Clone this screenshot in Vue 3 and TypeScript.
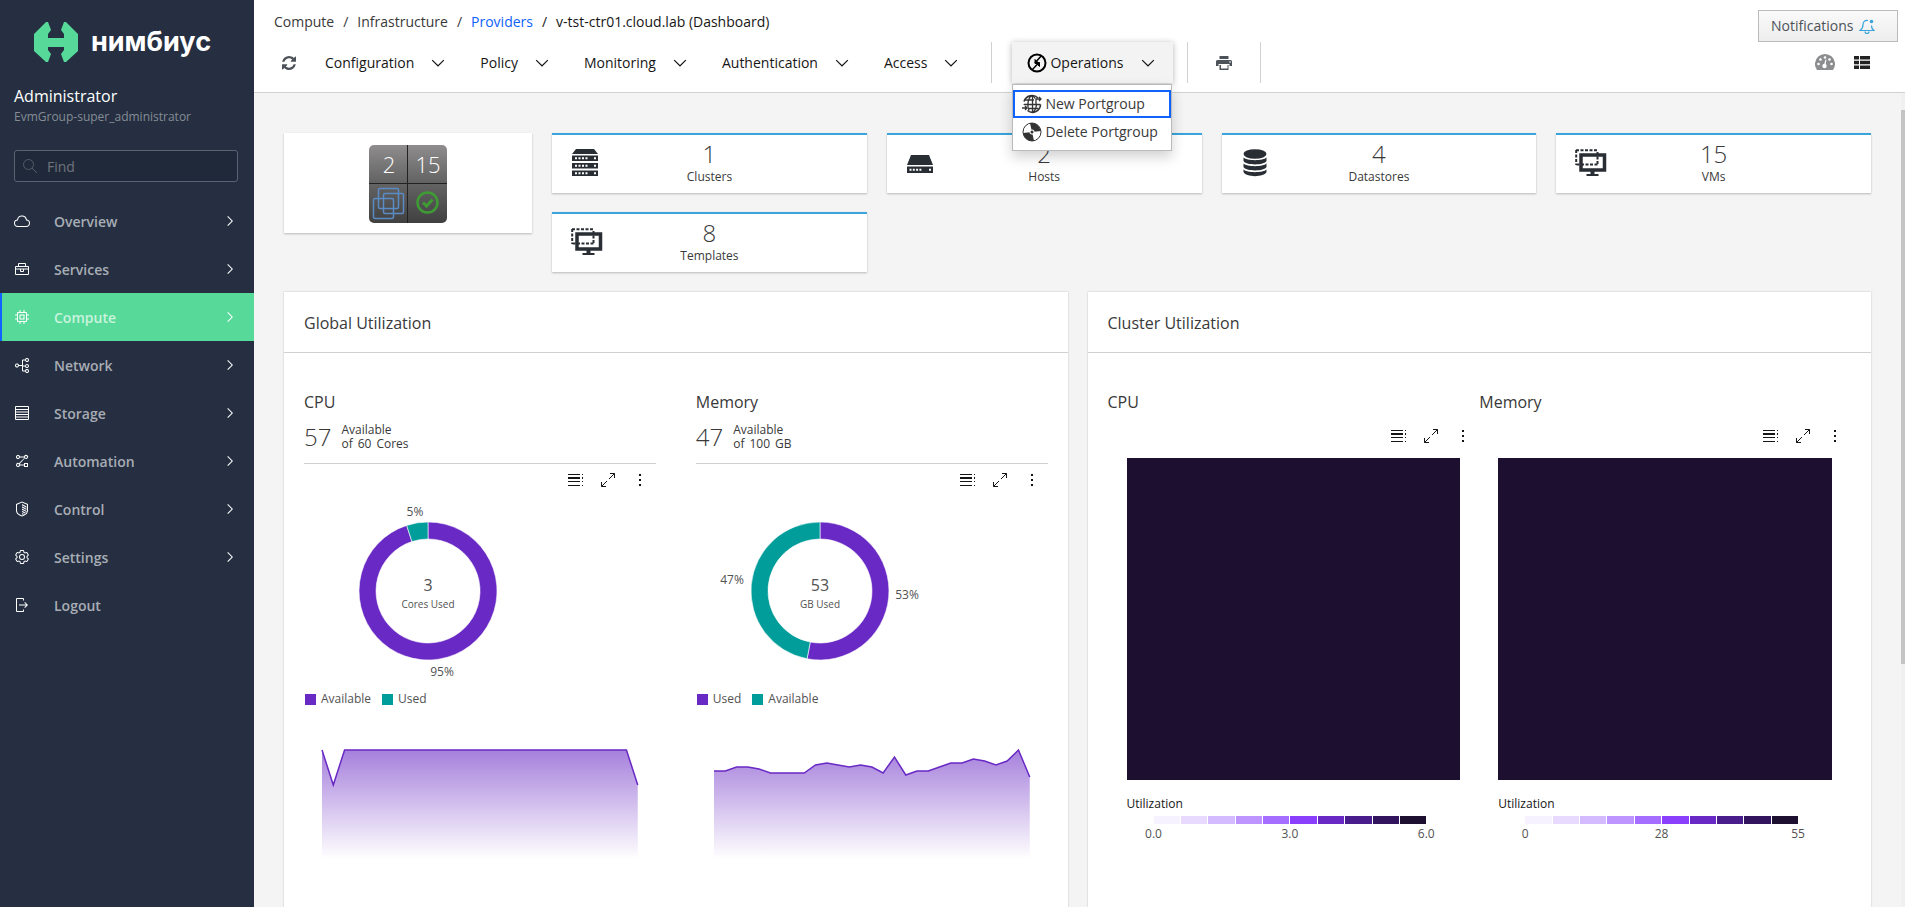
<script setup lang="ts">
import { ref } from 'vue'

interface NavItem {
  id: string
  label: string
  paths: string[]
  active?: boolean
  leaf?: boolean
}

const nav: NavItem[] = [
  {
    id: 'overview',
    label: 'Overview',
    paths: [
      'M16,7h0a7.66,7.66,0,0,1,1.51.15,8,8,0,0,1,6.35,6.34l.26,1.35,1.35.24a5.5,5.5,0,0,1-1,10.92H7.5a5.5,5.5,0,0,1-1-10.92l1.34-.24.26-1.35A8,8,0,0,1,16,7m0-2a10,10,0,0,0-9.83,8.12A7.5,7.5,0,0,0,7.49,28h17a7.5,7.5,0,0,0,1.32-14.88,10,10,0,0,0-7.94-7.94A10.27,10.27,0,0,0,16,5Z',
    ],
  },
  {
    id: 'services',
    label: 'Services',
    paths: [
      'M28,10H24V6a2,2,0,0,0-2-2H10A2,2,0,0,0,8,6v4H4a2,2,0,0,0-2,2V26a2,2,0,0,0,2,2H28a2,2,0,0,0,2-2V12A2,2,0,0,0,28,10ZM10,6H22v4H10ZM28,12v3H4V12ZM4,26V17h8v3a2,2,0,0,0,2,2h4a2,2,0,0,0,2-2V17h8v9ZM14,17h4v3H14Z',
    ],
  },
  {
    id: 'compute',
    label: 'Compute',
    active: true,
    paths: [
      'M11,11V21H21V11Zm8,8H13V13h6Z',
      'M30,13V11H26V8a2,2,0,0,0-2-2H21V2H19V6H13V2H11V6H8A2,2,0,0,0,6,8v3H2v2H6v6H2v2H6v3a2,2,0,0,0,2,2h3v4h2V26h6v4h2V26h3a2,2,0,0,0,2-2V21h4V19H26V13ZM24,24H8V8H24Z',
    ],
  },
  {
    id: 'network',
    label: 'Network',
    paths: [
      'M26,14a4,4,0,0,0-3.86,3H18V7h4.14a4,4,0,1,0,0-2H18a2,2,0,0,0-2,2v9H9.86a4,4,0,1,0,0,2H16v9a2,2,0,0,0,2,2h4.14a4,4,0,1,0,0-2H18V19h4.14A4,4,0,1,0,26,14ZM26,4a2,2,0,1,1-2,2A2,2,0,0,1,26,4ZM6,19a2,2,0,1,1,2-2A2,2,0,0,1,6,19ZM26,26a2,2,0,1,1-2,2A2,2,0,0,1,26,26ZM26,20a2,2,0,1,1,2-2A2,2,0,0,1,26,20Z',
    ],
  },
  {
    id: 'storage',
    label: 'Storage',
    paths: [
      'M28,2H4A2,2,0,0,0,2,4V28a2,2,0,0,0,2,2H28a2,2,0,0,0,2-2V4A2,2,0,0,0,28,2ZM28,4V8H4V4ZM28,10v3H4V10ZM28,15v3H4V15ZM28,20v3H4V20ZM4,28V25H28v3Z',
    ],
  },
  {
    id: 'automation',
    label: 'Automation',
    paths: [
      'M28,20H20v3H11.86a4,4,0,0,0-.5-1.1L21.5,10.6A4,4,0,1,0,20.14,7H11.86a4,4,0,1,0,0,2h8.28a4,4,0,0,0,.3.8L10,20.5A4,4,0,1,0,11.86,25H20v3h8ZM24,6a2,2,0,1,1-2,2A2,2,0,0,1,24,6ZM8,10a2,2,0,1,1,2-2A2,2,0,0,1,8,10ZM8,26a2,2,0,1,1,2-2A2,2,0,0,1,8,26ZM26,26H22V22h4Z',
    ],
  },
  {
    id: 'control',
    label: 'Control',
    paths: [
      'M16,1,4,6V19c0,6,5,9.500,12,12,7-2.500,12-6,12-12V6ZM16,28.800C10,26.500,6,24,6,19V7.400L16,3.200,26,7.400V19C26,24,22,26.500,16,28.800Z',
      'M16,6l9,5v2.300l-9,-5ZM16,10.500l9,5v2.300l-9,-5ZM16,15l9,5v2l-9,-4.700ZM16,19.500l7.500,4.200l-1.500,1.500l-6,-3.400ZM16,24l4,2.200l-2,1.200l-2,-1Z',
    ],
  },
  {
    id: 'settings',
    label: 'Settings',
    paths: [
      'M27,16.76c0-.25,0-.5,0-.76s0-.51,0-.77l1.92-1.68A2,2,0,0,0,29.3,11L26.94,7a2,2,0,0,0-1.73-1,2,2,0,0,0-.64.1l-2.43.82a11.35,11.35,0,0,0-1.31-.75l-.51-2.52a2,2,0,0,0-2-1.61H13.64a2,2,0,0,0-2,1.61l-.51,2.52a11.48,11.48,0,0,0-1.32.75L7.43,6.06A2,2,0,0,0,6.79,6,2,2,0,0,0,5.06,7L2.7,11a2,2,0,0,0,.41,2.51L5,15.24c0,.25,0,.5,0,.76s0,.51,0,.77L3.11,18.45A2,2,0,0,0,2.7,21L5.06,25a2,2,0,0,0,1.73,1,2,2,0,0,0,.64-.1l2.43-.82a11.35,11.35,0,0,0,1.31.75l.51,2.52a2,2,0,0,0,2,1.61h4.72a2,2,0,0,0,2-1.61l.51-2.52a11.48,11.48,0,0,0,1.32-.75l2.42.82a2,2,0,0,0,.64.1,2,2,0,0,0,1.73-1L29.3,21a2,2,0,0,0-.41-2.51ZM25.21,24l-3.43-1.16a8.86,8.86,0,0,1-2.71,1.57L18.36,28H13.64l-.71-3.55a9.36,9.36,0,0,1-2.7-1.57L6.79,24,4.43,20l2.72-2.4a8.9,8.9,0,0,1,0-3.13L4.43,12,6.79,8l3.43,1.16a8.86,8.86,0,0,1,2.71-1.57L13.64,4h4.72l.71,3.55a9.36,9.36,0,0,1,2.7,1.57L25.21,8,27.57,12l-2.72,2.4a8.9,8.9,0,0,1,0,3.13L27.57,20Z',
      'M16,22a6,6,0,1,1,6-6A5.94,5.94,0,0,1,16,22Zm0-10a3.91,3.91,0,0,0-4,4,3.91,3.91,0,0,0,4,4,3.91,3.91,0,0,0,4-4A3.91,3.91,0,0,0,16,12Z',
    ],
  },
  {
    id: 'logout',
    label: 'Logout',
    leaf: true,
    paths: [
      'M6,30H18a2,2,0,0,0,2-2V25H18v3H6V4H18V7h2V4a2,2,0,0,0-2-2H6A2,2,0,0,0,4,4V28A2,2,0,0,0,6,30Z',
      'M20.586,20.586L24.172,17H10V15H24.172L20.586,11.414L22,10L28,16L22,22Z',
    ],
  },
]

const menus = ['Configuration', 'Policy', 'Monitoring', 'Authentication', 'Access']
const operationsOpen = ref(true)
const find = ref('')

const tiles = [
  { label: 'Clusters', value: 1, icon: 'cluster' },
  { label: 'Hosts', value: 2, icon: 'host' },
  { label: 'Datastores', value: 4, icon: 'datastore' },
  { label: 'VMs', value: 15, icon: 'vm' },
  { label: 'Templates', value: 8, icon: 'vm' },
]

const PURPLE = '#6929c4'
const TEAL = '#009d9a'

function slice(cx: number, cy: number, from: number, to: number): string {
  const outer = 69
  const inner = 52
  const point = (r: number, share: number) => {
    const angle = share * 2 * Math.PI
    return `${(cx + r * Math.sin(angle)).toFixed(2)},${(cy - r * Math.cos(angle)).toFixed(2)}`
  }
  const large = to - from > 0.5 ? 1 : 0
  return `M${point(outer, from)}A${outer},${outer},0,${large},1,${point(outer, to)}L${point(inner, to)}A${inner},${inner},0,${large},0,${point(inner, from)}Z`
}

function line(values: number[]): string {
  const step = 316 / (values.length - 1)
  return values.map((v, i) => `${(i * step).toFixed(1)},${v}`).join(' ')
}

const cpuTrend = Array.from({ length: 29 }, (_, i) => (i === 1 || i === 28 ? 36 : 1))
const memoryTrend = [
  22, 22, 18, 18, 20, 24, 24, 24, 24, 16, 14, 16, 18, 16, 18, 24, 8, 26, 22, 22, 18, 14, 14, 10, 12, 16,
  12, 1, 28,
]

const utilization = [
  {
    title: 'CPU',
    available: 57,
    total: ['of', '60', 'Cores'],
    used: 3,
    unit: 'Cores Used',
    slices: [
      { name: 'Available', color: PURPLE, d: slice(124, 91, 0, 0.95), text: '95%', x: 138, y: 176 },
      { name: 'Used', color: TEAL, d: slice(124, 91, 0.95, 1), text: '5%', x: 111, y: 16 },
    ],
    trend: line(cpuTrend),
  },
  {
    title: 'Memory',
    available: 47,
    total: ['of', '100', 'GB'],
    used: 53,
    unit: 'GB Used',
    slices: [
      { name: 'Used', color: PURPLE, d: slice(124, 91, 0, 0.53), text: '53%', x: 211, y: 99 },
      { name: 'Available', color: TEAL, d: slice(124, 91, 0.53, 1), text: '47%', x: 36, y: 84 },
    ],
    trend: line(memoryTrend),
  },
]

const scale = ['#f6f2ff', '#e8daff', '#d4bbff', '#be95ff', '#a56eff', '#8a3ffc', '#6929c4', '#491d8b', '#31135e', '#1c0f30']
const heatmaps = [
  { title: 'CPU', ticks: ['0.0', '3.0', '6.0'] },
  { title: 'Memory', ticks: ['0', '28', '55'] },
]
</script>

<template>
  <div class="shell">
    <aside class="sidebar">
      <div class="brand">
        <svg class="brand-mark" viewBox="0 0 44 40" aria-hidden="true">
          <path
            d="M12 0h2l3 8-3 4v4h16v-4l-3-4 3-8h2l12 12v17L32 40h-2l-3-8 3-4v-3H14v3l3 4-3 8h-2L0 29V12z"
            fill="#57da99"
          />
        </svg>
        <span class="brand-name">нимбиус</span>
      </div>
      <div class="user">
        <div class="user-name">Administrator</div>
        <div class="user-group">EvmGroup-super_administrator</div>
      </div>
      <label class="search">
        <svg class="search-icon" viewBox="0 0 16 16" aria-hidden="true">
          <circle cx="6.500" cy="6.500" r="5" fill="none" stroke="currentColor" />
          <path d="M10 10l5 5" stroke="currentColor" />
        </svg>
        <input v-model="find" type="text" placeholder="Find" aria-label="Find" />
      </label>
      <nav class="nav">
        <a v-for="item in nav" :key="item.id" href="#" class="nav-item" :class="{ active: item.active }">
          <svg class="icon16" viewBox="0 0 32 32" fill="currentColor" aria-hidden="true">
            <path v-for="(d, i) in item.paths" :key="i" :d="d" fill-rule="evenodd" />
          </svg>
          <span class="nav-label">{{ item.label }}</span>
          <svg v-if="!item.leaf" class="icon16" viewBox="0 0 16 16" fill="currentColor" aria-hidden="true">
            <path d="M11 8L6 13 5.300 12.300 9.600 8 5.300 3.700 6 3z" />
          </svg>
        </a>
      </nav>
    </aside>

    <div class="page">
      <header class="header">
        <div class="header-left">
          <nav class="crumbs" aria-label="Breadcrumb">
            <span>Compute</span><span>/</span><span>Infrastructure</span><span>/</span>
            <a href="#">Providers</a><span class="dark">/</span>
            <span class="dark">v-tst-ctr01.cloud.lab (Dashboard)</span>
          </nav>
          <div class="toolbar">
            <button class="refresh" type="button" aria-label="Refresh">
              <svg viewBox="0 0 1536 1536" fill="currentColor">
                <path
                  d="M1511 928q0 5-1 7-64 268-268 434.500t-478 166.500q-146 0-282.500-55t-243.500-157l-129 129q-19 19-45 19t-45-19-19-45v-448q0-26 19-45t45-19h448q26 0 45 19t19 45-19 45l-137 137q71 66 161 102t187 36q134 0 250-65t186-179q11-17 53-117 8-23 30-23h192q13 0 22.500 9.500t9.500 22.500zM1536 128v448q0 26-19 45t-45 19h-448q-26 0-45-19t-19-45 19-45l138-138q-148-137-349-137-134 0-250 65t-186 179q-11 17-53 117-8 23-30 23h-199q-13 0-22.500-9.500t-9.500-22.500v-7q65-268 270-434.500t480-166.500q146 0 284 55.500t245 156.500l130-129q19-19 45-19t45 19 19 45z"
                />
              </svg>
            </button>
            <button v-for="menu in menus" :key="menu" class="menu" type="button">
              {{ menu }}
              <svg class="icon20" viewBox="0 0 16 16" fill="currentColor" aria-hidden="true">
                <path d="M8 11L3 6 3.700 5.300 8 9.600 12.300 5.300 13 6z" />
              </svg>
            </button>
            <div class="group">
              <div class="dropdown">
                <button class="operations" type="button" :aria-expanded="operationsOpen" @click="operationsOpen = !operationsOpen">
                  <svg class="icon20" viewBox="0 0 20 20" fill="none" stroke="#000" stroke-width="2" aria-hidden="true">
                    <circle cx="10" cy="10" r="8.500" />
                    <path d="M14.500 2.500L8 10M5 17l7-7.500" stroke-width="1.500" />
                    <path d="M8 6.500v4h4z" fill="#000" stroke-width="1" />
                    <path d="M8.500 9.500h4v4z" fill="#000" stroke-width="1" />
                  </svg>
                  <span class="operations-label">Operations</span>
                  <svg class="icon20" viewBox="0 0 16 16" fill="currentColor" aria-hidden="true">
                    <path d="M8 11L3 6 3.700 5.300 8 9.600 12.300 5.300 13 6z" />
                  </svg>
                </button>
                <div v-if="operationsOpen" class="dropdown-list">
                  <button type="button" class="option focused">
                    <svg class="icon20" viewBox="0 0 20 20" fill="none" stroke="#333" stroke-width="1.300" aria-hidden="true">
                      <path d="M16 4A8.500 8.500 0 0 0 2 7.500M2 10.500v.5M5.500 16.500a8 8 0 0 0 13-6" stroke-width="1.600" />
                      <path d="M13 4.500C11.500 1 8.500 1 7 5s-1.500 8 0 11.500M10.500 2v16M10.500 18c2-.5 3.500-3 4-7.500M3 6h9M2 10.500h16.500M7 14.500h9.500" />
                      <path d="M14 10V5h5M17 3l2 2-2 2M0 14h5M3 12l2 2-2 2" />
                    </svg>
                    New Portgroup
                  </button>
                  <button type="button" class="option">
                    <svg class="icon20" viewBox="0 0 20 20" aria-hidden="true">
                      <circle cx="10" cy="10" r="9" fill="#fff" stroke="#333" />
                      <path d="M10 10L8 1.200A9 9 0 0 1 18.800 9zM10 10L12 18.800A9 9 0 0 1 1.200 11z" fill="#333" />
                      <circle cx="10" cy="10" r="2.500" fill="#fff" />
                      <circle cx="10" cy="10" r="1.500" fill="#333" />
                    </svg>
                    Delete Portgroup
                  </button>
                </div>
              </div>
            </div>
            <div class="group">
              <button class="print" type="button" aria-label="Print">
                <svg viewBox="0 0 16 14" aria-hidden="true">
                  <path d="M3.500 0h9v3h-9zM1.500 4h13A1.500 1.500 0 0 1 16 5.500V10h-2.500V8h-11v2H0V5.500A1.500 1.500 0 0 1 1.500 4zM3.500 9h9v5h-9z" fill="#4d5258" />
                  <path d="M5 9h6.500v3.500H5z" fill="#fff" />
                  <circle cx="14" cy="6" r=".8" fill="#fff" />
                </svg>
              </button>
            </div>
          </div>
        </div>
        <div class="header-right">
          <button class="notifications" type="button">
            Notifications
            <svg class="icon16" viewBox="0 0 16 16" fill="none" stroke="#39a5dc" stroke-width="1.200" aria-hidden="true">
              <path d="M9 2.500C5.500 2 4 4 4 7c0 2.500-1 4-3 5.500h14C13.300 11.500 12.500 9.500 12.500 7.500M6 13.500a2 2 0 0 0 4 0" />
              <circle cx="12.500" cy="3.500" r="1.800" fill="#39a5dc" stroke="none" />
            </svg>
          </button>
          <div class="views">
            <button type="button" aria-label="Dashboard view">
              <svg width="20" height="16" viewBox="0 0 20 16" aria-hidden="true">
                <path d="M2 16A10 10 0 1 1 18 16z" fill="#8b8d8f" />
                <g fill="#fff">
                  <circle cx="3.500" cy="10" r="1.300" /><circle cx="5.500" cy="5.500" r="1.300" />
                  <circle cx="10" cy="3.500" r="1.300" /><circle cx="14.500" cy="5.500" r="1.300" />
                  <circle cx="16.500" cy="10" r="1.300" /><circle cx="9.500" cy="12" r="2.200" />
                  <path d="M10.500 5.500l1 .3-1.300 6.700-1.500-.5z" />
                </g>
              </svg>
            </button>
            <button type="button" aria-label="Summary view">
              <svg width="16" height="13" viewBox="0 0 16 13" fill="#222" aria-hidden="true">
                <path d="M0 0h5v3.500H0zM6 0h10v3.500H6zM0 4.700h5v3.500H0zM6 4.700h10v3.500H6zM0 9.500h5V13H0zM6 9.500h10V13H6z" />
              </svg>
            </button>
          </div>
        </div>
      </header>

      <div class="body">
        <main class="content">
          <section class="summary">
            <div class="card quad-card">
              <svg class="quad" viewBox="0 0 78 78" role="img" aria-label="Provider status">
                <defs>
                  <linearGradient id="quadTop" x1="0" y1="0" x2="0" y2="1">
                    <stop offset="0" stop-color="#8f8d8e" />
                    <stop offset="1" stop-color="#626262" />
                  </linearGradient>
                  <linearGradient id="quadBottom" x1="0" y1="0" x2="0" y2="1">
                    <stop offset="0" stop-color="#636363" />
                    <stop offset="1" stop-color="#404040" />
                  </linearGradient>
                  <clipPath id="quadClip"><rect width="78" height="78" rx="5" /></clipPath>
                </defs>
                <g clip-path="url(#quadClip)">
                  <rect width="78" height="38" fill="url(#quadTop)" />
                  <rect y="39" width="78" height="39" fill="url(#quadBottom)" />
                  <path d="M0 38.500h78M38.500 0v78" stroke="#222" />
                </g>
                <g class="quad-text">
                  <text x="20" y="28">2</text>
                  <text x="59" y="28">15</text>
                </g>
                <g fill="none" stroke="#5b8bc4" stroke-width="1.500">
                  <rect x="9.500" y="43.500" width="20" height="20" rx="1.500" />
                  <rect x="14.500" y="48.500" width="20" height="20" rx="1.500" />
                  <rect x="4.500" y="53.500" width="20" height="20" rx="1.500" />
                </g>
                <circle cx="58.500" cy="57.500" r="10" fill="none" stroke="#3f9c35" stroke-width="2.500" />
                <path d="M54 57.500l3.500 3.500 6-6.500" fill="none" stroke="#3f9c35" stroke-width="3" />
              </svg>
            </div>
            <div class="tiles">
              <a v-for="tile in tiles" :key="tile.label" href="#" class="card tile">
                <svg v-if="tile.icon === 'cluster'" class="tile-icon" viewBox="0 0 32 28" fill="#292e34" aria-hidden="true">
                  <path d="M5 0h18l4 5H1zM1 6.500h26V12H1zM1 14h26v5.500H1zM1 21.500h26V27H1z" />
                  <path d="M4 9.200h13M4 16.700h13M4 24.200h13" stroke="#fff" stroke-width="2" stroke-dasharray="2 1.500" />
                  <path d="M23 9.200h2M23 16.700h2M23 24.200h2" stroke="#fff" stroke-width="2" />
                </svg>
                <svg v-else-if="tile.icon === 'host'" class="tile-icon" viewBox="0 0 32 28" fill="#292e34" aria-hidden="true">
                  <path d="M5 6h18l4 10H1zM1 17.500h26V24H1z" />
                  <path d="M3.500 20.700h12" stroke="#fff" stroke-width="2" stroke-dasharray="2 1.300" />
                  <path d="M23 20.700h2" stroke="#fff" stroke-width="2" />
                </svg>
                <svg v-else-if="tile.icon === 'datastore'" class="tile-icon" viewBox="0 0 32 28" fill="#292e34" aria-hidden="true">
                  <ellipse cx="14" cy="5" rx="11.500" ry="4.800" />
                  <path d="M2.500 8.500c3 3.500 20 3.500 23 0V12c-2 4.500-21 4.500-23 0z" />
                  <path d="M2.500 14.500c3 3.500 20 3.500 23 0V18c-2 4.500-21 4.500-23 0z" />
                  <path d="M2.500 20.500c3 3.500 20 3.500 23 0V23c-2 5.500-21 5.500-23 0z" />
                </svg>
                <svg v-else class="tile-icon" viewBox="0 0 32 28" aria-hidden="true">
                  <path d="M6 6h23.500V21H6z" fill="none" stroke="#292e34" stroke-width="3.500" />
                  <path d="M15.500 22h4v3h4v2H11.500v-2h4z" fill="#292e34" />
                  <path d="M1 1.200h22M1.200 1v15M1.500 15.500H23M22.500 3v12" fill="none" stroke="#292e34" stroke-width="2" stroke-dasharray="3 1.500" />
                </svg>
                <div class="tile-text">
                  <div class="figure">{{ tile.value }}</div>
                  <div class="tile-label">{{ tile.label }}</div>
                </div>
              </a>
            </div>
          </section>

          <section class="panels">
            <article class="panel">
              <h2>Global Utilization</h2>
              <div class="panel-body global">
                <div v-for="chart in utilization" :key="chart.title" class="metric">
                  <h3>{{ chart.title }}</h3>
                  <div class="availability">
                    <span class="figure">{{ chart.available }}</span>
                    <div class="availability-text">
                      <div>Available</div>
                      <div class="of-total"><span v-for="word in chart.total" :key="word">{{ word }}</span></div>
                    </div>
                  </div>
                  <div class="chart-tools">
                    <button type="button" aria-label="Show as table">
                      <svg class="icon16" viewBox="0 0 16 16" fill="#161616"><path d="M0 2h12v1H0zM0 5h12v2H0zM0 9h12v1H0zM0 13h12v1H0zM14 2h1v1h-1zM14 5h1v2h-1zM14 9h1v1h-1zM14 13h1v1h-1z" /></svg>
                    </button>
                    <button type="button" aria-label="Make fullscreen">
                      <svg class="icon16" viewBox="0 0 16 16" fill="none" stroke="#161616"><path d="M10 1.500h4.500V6M14.500 1.500L9 7M6 14.500H1.500V10M1.500 14.500L7 9" /></svg>
                    </button>
                    <button type="button" aria-label="More options">
                      <svg class="icon16" viewBox="0 0 16 16" fill="#161616"><path d="M7 2h2v2H7zM7 7h2v2H7zM7 12h2v2H7z" /></svg>
                    </button>
                  </div>
                  <svg class="donut" viewBox="0 0 248 180" role="img" :aria-label="chart.title">
                    <path v-for="part in chart.slices" :key="part.name" :d="part.d" :fill="part.color" stroke="#fff" stroke-width="0.600" />
                    <text v-for="part in chart.slices" :key="part.text" :x="part.x" :y="part.y" class="share">{{ part.text }}</text>
                    <text x="124" y="91" class="used">{{ chart.used }}</text>
                    <text x="124" y="108" class="unit">{{ chart.unit }}</text>
                  </svg>
                  <ul class="legend">
                    <li v-for="part in chart.slices" :key="part.name">
                      <span class="swatch" :style="{ background: part.color }"></span>{{ part.name }}
                    </li>
                  </ul>
                  <svg class="trend" viewBox="0 0 316 110" preserveAspectRatio="none" aria-hidden="true">
                    <defs>
                      <linearGradient :id="'fill' + chart.title" gradientUnits="userSpaceOnUse" x1="0" y1="0" x2="0" y2="110">
                        <stop offset="0" :stop-color="PURPLE" stop-opacity="0.600" />
                        <stop offset="1" :stop-color="PURPLE" stop-opacity="0" />
                      </linearGradient>
                    </defs>
                    <polygon :points="'0,110 ' + chart.trend + ' 316,110'" :fill="'url(#fill' + chart.title + ')'" />
                    <polyline :points="chart.trend" fill="none" :stroke="PURPLE" stroke-width="1.500" vector-effect="non-scaling-stroke" />
                  </svg>
                </div>
              </div>
            </article>

            <article class="panel">
              <h2>Cluster Utilization</h2>
              <div class="panel-body cluster">
                <div v-for="map in heatmaps" :key="map.title" class="metric">
                  <h3>{{ map.title }}</h3>
                  <div class="chart-tools">
                    <button type="button" aria-label="Show as table">
                      <svg class="icon16" viewBox="0 0 16 16" fill="#161616"><path d="M0 2h12v1H0zM0 5h12v2H0zM0 9h12v1H0zM0 13h12v1H0zM14 2h1v1h-1zM14 5h1v2h-1zM14 9h1v1h-1zM14 13h1v1h-1z" /></svg>
                    </button>
                    <button type="button" aria-label="Make fullscreen">
                      <svg class="icon16" viewBox="0 0 16 16" fill="none" stroke="#161616"><path d="M10 1.500h4.500V6M14.500 1.500L9 7M6 14.500H1.500V10M1.500 14.500L7 9" /></svg>
                    </button>
                    <button type="button" aria-label="More options">
                      <svg class="icon16" viewBox="0 0 16 16" fill="#161616"><path d="M7 2h2v2H7zM7 7h2v2H7zM7 12h2v2H7z" /></svg>
                    </button>
                  </div>
                  <div class="heatmap"></div>
                  <div class="scale-title">Utilization</div>
                  <div class="scale">
                    <span v-for="color in scale" :key="color" :style="{ background: color }"></span>
                  </div>
                  <div class="ticks">
                    <span v-for="tick in map.ticks" :key="tick">{{ tick }}</span>
                  </div>
                </div>
              </div>
            </article>
          </section>
        </main>
        <div class="scrollbar"><div class="thumb"></div></div>
      </div>
    </div>
  </div>
</template>

<style>
body {
  margin: 0;
}
</style>

<style scoped>
.shell {
  display: flex;
  height: 100vh;
  overflow: hidden;
  font-family: 'Open Sans', 'Noto Sans', sans-serif;
  font-size: 14px;
  line-height: 20px;
  color: #161616;
}
.shell *,
.shell *::before {
  box-sizing: border-box;
}
a {
  color: inherit;
  text-decoration: none;
}
button {
  font: inherit;
  color: inherit;
  background: none;
  border: 0;
  padding: 0;
  display: flex;
  align-items: center;
}
.icon16 {
  width: 16px;
  height: 16px;
  flex: none;
}
.icon20 {
  width: 20px;
  height: 20px;
  flex: none;
}

.sidebar {
  width: 254px;
  flex: none;
  background: #252f41;
  color: #fff;
}
.brand {
  display: flex;
  align-items: center;
  gap: 13px;
  height: 64px;
  padding: 22px 34px 2px;
}
.brand-mark {
  width: 44px;
  height: 40px;
}
.brand-name {
  font-family: Inter, 'Open Sans', sans-serif;
  font-weight: 700;
  font-size: 27px;
  line-height: 40px;
}
.user {
  padding: 20px 14px 0;
}
.user-name {
  font-size: 16px;
  line-height: 24px;
}
.user-group {
  font-size: 12px;
  line-height: 18px;
  color: #868c96;
}
.search {
  display: block;
  position: relative;
  margin: 24px 16px 15px 14px;
}
.search-icon {
  position: absolute;
  left: 8px;
  top: 8px;
  width: 16px;
  height: 16px;
  color: #565c66;
}
.search input {
  display: block;
  width: 100%;
  height: 32px;
  padding: 0 8px 0 32px;
  border: 1px solid #5b6373;
  border-radius: 3px;
  background: #20293a;
  color: #fff;
  font: inherit;
}
.search input::placeholder {
  color: #6f747c;
  opacity: 1;
}
.nav-item {
  display: flex;
  align-items: center;
  gap: 24px;
  height: 48px;
  padding: 0 16px 0 14px;
}
.nav-item.active {
  background: #57da99;
  box-shadow: inset 2px 0 #0f62fe;
}
.nav-label {
  flex: 1;
  padding-top: 2px;
  font-weight: 600;
  color: #a8adb5;
}
.active .nav-label {
  color: #c9f3dd;
}

.page {
  flex: 1;
  min-width: 0;
  display: flex;
  flex-direction: column;
}
.header {
  display: flex;
  justify-content: space-between;
  background: #fff;
  border-bottom: 1px solid #d1d1d1;
  padding: 10px 7px 9px 20px;
}
.crumbs {
  display: flex;
  gap: 9px;
  height: 24px;
  line-height: 24px;
  color: #393939;
}
.crumbs a {
  color: #0f62fe;
}
.crumbs .dark {
  color: #161616;
}
.toolbar {
  display: flex;
  align-items: center;
  height: 41px;
  margin-top: 8px;
}
.refresh {
  padding: 0 13px 0 8px;
  color: #4d5258;
}
.refresh svg {
  width: 14px;
  height: 14px;
}
.menu {
  height: 40px;
  gap: 14px;
  padding: 0 16px;
}
.group {
  display: flex;
  align-items: center;
  height: 41px;
  margin-left: 14px;
  padding: 0 14px 0 20px;
  border-left: 1px solid #d1d1d1;
}
.toolbar .group:last-child {
  margin-left: 0;
  padding: 0 28px;
  border-right: 1px solid #d1d1d1;
}
.dropdown {
  position: relative;
}
.operations {
  height: 41px;
  padding: 0 15px;
  gap: 3px;
  background: #f3f3f3;
  box-shadow: 0 1px 6px rgba(0, 0, 0, 0.3);
}
.operations-label {
  padding-right: 12px;
}
.dropdown-list {
  position: absolute;
  left: 0;
  top: 42px;
  z-index: 5;
  width: 160px;
  padding: 5px 0 4px;
  background: #fff;
  border: 1px solid #bbb;
  box-shadow: 0 6px 12px rgba(0, 0, 0, 0.18);
}
.option {
  width: 100%;
  height: 28px;
  padding: 0 9px;
  gap: 3px;
  white-space: nowrap;
  color: #393939;
}
.option.focused {
  box-shadow: inset 0 0 0 2px #0f62fe;
}
.print svg {
  width: 16px;
  height: 14px;
}
.notifications {
  width: 140px;
  height: 32px;
  padding: 0 12px;
  gap: 6px;
  border: 1px solid #bbb;
  background: linear-gradient(#fafafa, #ededed);
  color: #4d5258;
}
.views {
  display: flex;
  gap: 19px;
  justify-content: flex-end;
  margin-top: 12px;
  padding-right: 28px;
}

.body {
  flex: 1;
  min-height: 0;
  display: flex;
  background: #f4f4f4;
}
.content {
  flex: 1;
  min-width: 0;
  overflow: auto;
  scrollbar-width: none;
  padding: 40px 30px;
}
.scrollbar {
  width: 4px;
  background: #f0f0f0;
}
.thumb {
  height: 68%;
  margin-top: 17px;
  background: #c4c4c4;
}
.card {
  background: #fff;
  box-shadow: 0 1px 2px rgba(3, 3, 3, 0.25);
}
.summary {
  display: grid;
  grid-template-columns: 19fr 101fr;
  gap: 20px;
  align-items: start;
}
.quad-card {
  display: flex;
  align-items: center;
  justify-content: center;
  height: 100px;
  padding-top: 2px;
}
.quad {
  width: 78px;
  height: 78px;
}
.quad-text {
  font-size: 22px;
  font-weight: 300;
  fill: #fff;
  text-anchor: middle;
}
.tiles {
  display: grid;
  grid-template-columns: repeat(4, 1fr);
  gap: 19px 20px;
}
.tile {
  position: relative;
  height: 60px;
  border-top: 2px solid #39a5dc;
}
.tile-icon {
  position: absolute;
  left: 19px;
  top: 14px;
  width: 32px;
  height: 28px;
}
.tile-text {
  padding-top: 5px;
  text-align: center;
  color: #393939;
}
.figure {
  font-size: 24px;
  font-weight: 300;
  line-height: 28px;
}
.tile-label {
  font-size: 12px;
  line-height: 18px;
}

.panels {
  display: grid;
  grid-template-columns: 1fr 1fr;
  gap: 20px;
  margin-top: 20px;
}
.panel {
  background: #fff;
  box-shadow: 0 0 2px rgba(3, 3, 3, 0.2);
  min-height: 680px;
  color: #393939;
}
h2,
h3 {
  margin: 0;
  font-size: 16px;
  font-weight: 400;
}
h2 {
  padding: 21px 20px 19px;
  line-height: 20px;
  height: 61px;
  border-bottom: 1px solid #d1d1d1;
}
h3 {
  line-height: 24px;
}
.panel-body {
  display: grid;
  grid-template-columns: 1fr 1fr;
  padding: 37px 20px 40px;
}
.global {
  gap: 40px;
}
.availability {
  display: flex;
  align-items: center;
  gap: 10px;
  height: 50px;
  padding-bottom: 3px;
  border-bottom: 1px solid #d1d1d1;
}
.availability-text {
  font-size: 12px;
  line-height: 14px;
}
.of-total {
  display: flex;
  gap: 5px;
}
.chart-tools {
  display: flex;
  justify-content: flex-end;
  gap: 16px;
  height: 32px;
  padding-right: 8px;
}
.donut {
  display: block;
  width: 248px;
  height: 180px;
  margin-top: 4px;
}
.share,
.used,
.unit {
  fill: #525252;
  text-anchor: middle;
}
.share {
  font-size: 12px;
}
.used {
  font-size: 16px;
}
.unit {
  font-size: 10px;
}
.legend {
  display: flex;
  gap: 11px;
  margin: 10px 0 0;
  padding: 0 1px;
  list-style: none;
  font-size: 12px;
  line-height: 18px;
  color: #525252;
}
.legend li {
  display: flex;
  align-items: center;
  gap: 5px;
}
.swatch {
  width: 11px;
  height: 11px;
}
.trend {
  display: block;
  width: calc(100% - 36px);
  height: 110px;
  margin: 41px 18px 0;
  overflow: visible;
}
.cluster .chart-tools {
  height: 30px;
  margin: 7px 0;
}
.heatmap {
  height: 322px;
  margin: 0 19px;
  background: #1c0f30;
}
.scale-title {
  margin: 15px 19px 0;
  font-size: 12px;
  line-height: 18px;
  color: #161616;
}
.scale {
  display: flex;
  gap: 1px;
  margin: 3px 53px 0 46px;
}
.scale span {
  flex: 1;
  height: 8px;
}
.ticks {
  display: flex;
  justify-content: space-between;
  margin: 1px 37px 0 30px;
  font-size: 12px;
  line-height: 18px;
  color: #525252;
}
.ticks span {
  width: 32px;
  text-align: center;
}
</style>
